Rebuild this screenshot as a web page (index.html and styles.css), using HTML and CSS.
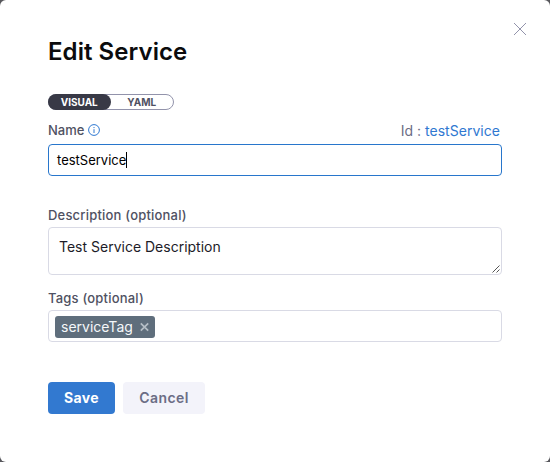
FILE: index.html
```html
<!DOCTYPE html>
<html lang="en">
<head>
<meta charset="utf-8">
<title>Edit Service</title>
<link rel="stylesheet" href="styles.css">
</head>
<body>
<main class="dialog">
  <button class="close" aria-label="Close"><svg width="14" height="14" viewBox="0 0 14 14"><path d="M1 1 13 13M13 1 1 13"/></svg></button>
  <h1 class="title">Edit Service</h1>
  <div class="toggle"><span class="option selected">VISUAL</span><span class="option">YAML</span></div>
  <div class="name-row">
    <span class="label name-label">Name</span>
    <svg class="info" width="12" height="12" viewBox="0 0 12 12"><circle cx="6" cy="6" r="5.4"/><path d="M6 5.2V9M6 3v1.1"/></svg>
    <span class="id">Id : <span class="id-value">testService</span></span>
  </div>
  <div class="field name-field"><span>testService</span><i class="caret"></i></div>
  <div class="label desc-label">Description (optional)</div>
  <div class="field desc-field"><span>Test Service Description</span>
    <svg class="grip" width="8" height="8" viewBox="0 0 8 8"><path d="M.5 7.5l7-7M4.5 7.5l3-3"/></svg>
  </div>
  <div class="label tags-label">Tags (optional)</div>
  <div class="field tags-field">
    <span class="tag"><span class="tag-text">serviceTag</span><svg width="9" height="10" viewBox="0 0 9 10"><path d="M.8 1.3l7.4 7.4M8.2 1.3.8 8.7"/></svg></span>
  </div>
  <div class="actions"><button class="btn save">Save</button><button class="btn cancel">Cancel</button></div>
</main>
</body>
</html>
```
FILE: styles.css
```css
* { box-sizing: border-box; }
body { margin: 0; background: #57575c; font-family: Inter, "Liberation Sans", sans-serif; }
button { border: 0; padding: 0; font-family: inherit; }
svg { display: block; fill: none; flex: none; }
.dialog { position: relative; height: 462px; padding: 37px 48px 0; background: #fff; border-radius: 6px; overflow: hidden; }
.close { position: absolute; top: 22px; right: 23px; background: none; }
.close svg { stroke: #9293ab; stroke-width: 1; }
.title { margin: 0; font-size: 24px; line-height: 30px; font-weight: 600; letter-spacing: .06px; color: #0b0b0d; white-space: nowrap; }
.toggle { display: flex; width: 126px; height: 16px; margin-top: 27px; border: 1px solid #9293ab; border-radius: 8px; }
.option { flex: 1; font-size: 10px; line-height: 14px; font-weight: 700; text-align: center; color: #4f5162; }
.selected { margin: -1px 0 -1px -1px; line-height: 16px; background: #383946; color: #fff; border-radius: 8px; }
.label { font-size: 13px; line-height: 16px; font-weight: 500; letter-spacing: .2px; color: #4f5162; white-space: nowrap; }
.name-row { display: flex; align-items: center; height: 34px; padding: 10px 2px 4px 0; }
.name-label { letter-spacing: 0; }
.info { margin-left: 4px; stroke: #2f78d1; stroke-width: 1; }
.id { margin-left: auto; padding-top: 2px; font-size: 14px; line-height: 18px; letter-spacing: .03px; color: #6b6d85; white-space: nowrap; }
.id-value { color: #2f78d1; }
.field { display: flex; border: 1px solid #d9dae5; border-radius: 4px; }
.name-field { height: 32px; align-items: center; padding-left: 8px; border-color: #2876cc; font-size: 13px; color: #000; }
.caret { width: 1px; height: 16px; background: #000; }
.desc-label { margin-top: 31px; }
.desc-field { position: relative; height: 48px; margin-top: 4px; padding: 10px; font-size: 14px; line-height: 17px; color: #1c1c28; }
.grip { position: absolute; right: 1px; bottom: 1px; stroke: #555; stroke-width: 1; }
.tags-label { margin-top: 15px; }
.tags-field { height: 32px; margin-top: 4px; padding: 5px 6px; }
.tag { display: flex; align-items: center; width: 100px; height: 22px; padding: 0 6px; justify-content: space-between; background: #5f6e7c; border-radius: 3px; color: #f5f8fa; font-size: 14px; }
.tag-text { line-height: 16px; }
.tag svg { stroke: #b4bdc5; stroke-width: 1.7; }
.actions { display: flex; gap: 8px; margin-top: 40px; }
.btn { height: 32px; padding-bottom: 1px; border-radius: 4px; font-size: 14px; font-weight: 600; letter-spacing: .4px; }
.save { width: 67px; background: #3279d0; color: #fff; font-weight: 700; }
.cancel { width: 82px; background: #f3f3fa; color: #6b6d85; }
```
